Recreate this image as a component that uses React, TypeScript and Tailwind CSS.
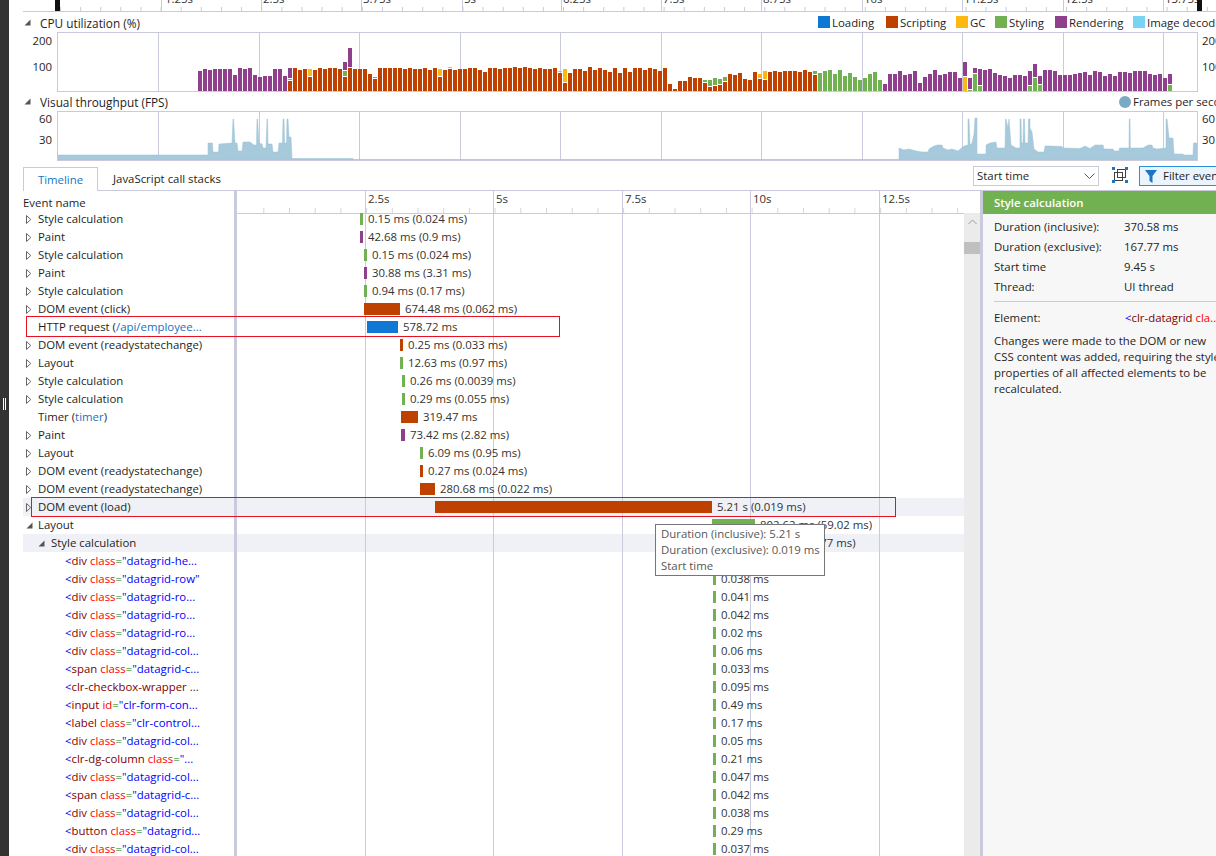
const grid = [158, 259, 359, 460, 560, 661, 761, 862, 962, 1063, 1163];
const rulerGrid = [161, 261, 361, 462, 561, 661, 761, 862, 962, 1063, 1163];
const colors: Record<string, string> = { o: "#bf4100", p: "#903f8c", g: "#72b152", y: "#fdb813" };

const cpu =
  "p20 p22 p21 p22 p22 p22 p22 p16 p23 p22 p23 p16 p14 p15 p15 p22 p22 p15 o10+g1+p10 o23 o21 o22 o14+y7 o21 o23 o22 o23 o23 o22 o14+g5+p8 o23+p19 o22 o22 o22 o17 o12+g1 o23 o23 o23 o23 o23 o22 o23 o22 o22 o23 o21 o23 o14+y7 o21 o22+y1 " +
  "o21 o22 o22 o23 o23 o21 o19 o23 o23 o22 o23 o23 o24 o23 o24 o23 o22 o23 o22 o22 o23 o18+y1 o8+y13 o18 o22 o22 o20 o24 o21 o23 o21 o19 o23 o18 o23 o19 o23 o23 o21 o23 o22 o20 o23 o7 o2 o10 o10 o14 o13 o13 o8+g2 o4+g6 " +
  "o5+g7 o6+g5 o9+g4 o17 o16 o18 o12 o11 o19 o12+y4 o11+y8 o19 o20 o19 o20 o20 o20 o19 o21 o19 o16+g3 g18 g20 g21 g17 g21 g15 g18 g14 g11 g13 g17 g19 g11 p7 p17 p17 p20 p16 p17 p20 p8 p14 p17 p21 p16 p17 p19 p19 p13 y14+p14 g1+p11 " +
  "g17+p5 g5+p16 p21 p22 p18 p16 p15 p13 p16 p16 p15 g5+p14 g13+p13 g6+p8 p21 p21 p20 p16 p16 p16 p17 p18 p19 p16 p20 p19 p15 p17 p15 p19 p19 p18 p20 p20 p20 p17 p16 p17 p13 g6+p10";

const fps =
  "57,155 208,155 208,143 212.5,143 213,152 218.5,152 219,144 232,143 233,119 233.5,119 235,143 237,143 238,151 242,151 243,142 250,142 254,145 256.5,145 257,119 257.5,119 259,143 262,144 263,148 266,148 267,119 267.5,119 268,144 272,144 273,152 278,152 279,143 282.5,143 283,119 284,119 284.5,143 286.5,143 287,119 288,119 289,137 291,137 292,158.5 353,158.5 353,159.5 899,159.5 " +
  "899,148 904,150 909,149 916,151 922,152 928,152 929,149 933,146.5 937,145 942,145 943,148 948,150 952,149 958,151 964,146 968,145 968,119 969,119 970,145 972,143 974,134 975,118 977,118 977,154 986,154 986,145 990,143 996,142 997,148 1005,148 1005.5,119 1006,119 1008,128 1009,119 1011,145 1016,148 1020,148 1020,119 1021,119 1021.5,143 1023,143 1023.5,119 1024.5,119 1025,143 1028,143 1028.5,119 1030,119 1030,128 1032,132 1034,149 1038,152 1044,152 1045,146 1050,146 1062,146.5 1063,148 1080,148.5 1085,146 1090,148.5 1095,145 1103,145 1104,149 1113,149 1114,151 1119,151 1119.5,148 1129,148 1129.3,119 1130,119 1130.3,148 1143,148 1148,145 1152,145 1153,148 1157,149 1166,148 1166,119 1167,119 1168,128 1169,138 1173,138 1174,154 1183,154 1184,155 1193,155 1193.5,143 1198,143 1198,160 57,160";

const TopRuler = () => {
  const labels = ["1.25s", "2.5s", "3.75s", "5s", "6.25s", "7.5s", "8.75s", "10s", "11.25s", "12.5s", "13.75s"];
  const minor = Array.from({ length: 58 }, (_, i) => 60 + i * 20.12);
  return (
    <svg viewBox="9 0 1207 12" className="block w-[1207px] h-[12px] shrink-0">
      <rect x="23" y="11" width="1193" height="1" fill="#c9cbdc" />
      {minor.map((x) => (
        <rect key={x} x={x} y="7" width="1" height="4" fill="#c9cbdc" />
      ))}
      {rulerGrid.map((x, i) => (
        <g key={x}>
          <rect x={x} y="0" width="1" height="11" fill="#c9cbdc" />
          <text x={i === 0 ? x + 4 : x + 2} y="3" fontSize="11.4" fill="#333">{labels[i]}</text>
        </g>
      ))}
      <rect x="55" y="0" width="5" height="11" fill="#111" />
      <rect x="1197" y="0" width="5" height="11" fill="#111" />
    </svg>
  );
};

const OpenArrow = () => (
  <svg width="7" height="7" viewBox="0 0 7 7" className="shrink-0">
    <polygon points="6.5,0.5 6.5,6.5 0.5,6.5" fill="#555" />
  </svg>
);

const ClosedArrow = () => (
  <svg width="6" height="9" viewBox="0 0 6 9" className="shrink-0">
    <polygon points="0.5,0.5 4.8,4.5 0.5,8.5" fill="none" stroke="#666" />
  </svg>
);

const LegendItem = ({ color, label, width }: { color: string; label: string; width: string }) => (
  <div className={`flex items-center gap-[2px] shrink-0 ${width}`}>
    <span className="w-[12px] h-[12px] block" style={{ backgroundColor: color }} />
    <span className="mt-[2px]">{label}</span>
  </div>
);

const CpuChart = () => (
  <svg viewBox="57 32 1141 60" className="block w-[1141px] h-[60px] shrink-0">
    {grid.map((x) => (
      <rect key={x} x={x} y="32" width="1" height="60" fill="#c9cbdc" />
    ))}
    {cpu.split(" ").map((bar, i) => {
      let y = 91;
      return bar.split("+").map((s, j) => {
        const h = Number(s.slice(1));
        y -= h;
        const r = <rect key={`${i}-${j}`} x={198 + i * 5} y={y} width="4" height={h} fill={colors[s[0]]} />;
        y -= 1;
        return r;
      });
    })}
    <rect x="57.5" y="32.5" width="1140" height="59" fill="none" stroke="#c9cbdc" />
  </svg>
);

const FpsChart = () => (
  <svg viewBox="57 111 1141 50" className="block w-[1141px] h-[50px] shrink-0">
    {grid.map((x) => (
      <rect key={x} x={x} y="111" width="1" height="50" fill="#c9cbdc" />
    ))}
    <polygon points={fps} fill="#a6c9dc" stroke="#9cc2d6" strokeWidth="0.5" />
    <rect x="57.5" y="111.5" width="1140" height="49" fill="none" stroke="#c9cbdc" />
  </svg>
);

const FitIcon = () => (
  <svg width="16" height="16" viewBox="0 0 16 16" className="shrink-0">
    <rect x="2.5" y="5.5" width="8" height="8" fill="none" stroke="#424242" />
    <rect x="5.5" y="2.5" width="8" height="8" fill="none" stroke="#424242" />
    <rect x="0" y="0" width="3" height="3" fill="#1b75c4" />
    <rect x="13" y="0" width="3" height="3" fill="#1b75c4" />
    <rect x="0" y="13" width="3" height="3" fill="#1b75c4" />
    <rect x="13" y="13" width="3" height="3" fill="#1b75c4" />
  </svg>
);

const Tag = ({ name, attr, value, dark }: { name: string; attr?: string; value?: string; dark?: string }) => (
  <>
    <span className="text-[#0000ff]">&lt;</span>
    <span className="text-[#800000]">{name}</span>
    {attr && <span className="text-[#ff0000]"> {attr}</span>}
    {value && <span className="text-[#008000]">=</span>}
    {value && <span className="text-[#0000ff]">{value}</span>}
    {dark && <span className="text-[#333]">{dark}</span>}
  </>
);

const Link = ({ label, link }: { label: string; link: string }) => (
  <>
    {label} (<span className="text-[#1a6fc0]">{link}</span>
  </>
);

type Row = {
  name: React.ReactNode;
  arrow?: "open" | "closed";
  level?: number;
  x: number;
  w: number;
  c: string;
  text: string;
  hl?: boolean;
};

const STYLE = "#72b152";
const PAINT = "#903f8c";
const SCRIPT = "#bf4100";
const LOAD = "#0e78d4";

const child = (name: string, attr: string, value: string, text: string): Row => ({
  name: <Tag name={name} attr={attr} value={value} />,
  level: 2,
  x: 713,
  w: 3,
  c: STYLE,
  text,
});

const rows: Row[] = [
  { name: "Style calculation", arrow: "closed", x: 360, w: 3, c: STYLE, text: "0.15 ms (0.024 ms)" },
  { name: "Paint", arrow: "closed", x: 360, w: 3, c: PAINT, text: "42.68 ms (0.9 ms)" },
  { name: "Style calculation", arrow: "closed", x: 364, w: 3, c: STYLE, text: "0.15 ms (0.024 ms)" },
  { name: "Paint", arrow: "closed", x: 364, w: 3, c: PAINT, text: "30.88 ms (3.31 ms)" },
  { name: "Style calculation", arrow: "closed", x: 364, w: 3, c: STYLE, text: "0.94 ms (0.17 ms)" },
  { name: "DOM event (click)", arrow: "closed", x: 364, w: 36, c: SCRIPT, text: "674.48 ms (0.062 ms)" },
  { name: <Link label="HTTP request" link="/api/employee..." />, x: 367, w: 31, c: LOAD, text: "578.72 ms" },
  { name: "DOM event (readystatechange)", arrow: "closed", x: 400, w: 3, c: SCRIPT, text: "0.25 ms (0.033 ms)" },
  { name: "Layout", arrow: "closed", x: 400, w: 3, c: STYLE, text: "12.63 ms (0.97 ms)" },
  { name: "Style calculation", arrow: "closed", x: 402, w: 3, c: STYLE, text: "0.26 ms (0.0039 ms)" },
  { name: "Style calculation", arrow: "closed", x: 402, w: 3, c: STYLE, text: "0.29 ms (0.055 ms)" },
  { name: <><Link label="Timer" link="timer" />)</>, x: 401, w: 17, c: SCRIPT, text: "319.47 ms" },
  { name: "Paint", arrow: "closed", x: 401, w: 4, c: PAINT, text: "73.42 ms (2.82 ms)" },
  { name: "Layout", arrow: "closed", x: 420, w: 3, c: STYLE, text: "6.09 ms (0.95 ms)" },
  { name: "DOM event (readystatechange)", arrow: "closed", x: 420, w: 3, c: SCRIPT, text: "0.27 ms (0.024 ms)" },
  { name: "DOM event (readystatechange)", arrow: "closed", x: 420, w: 15, c: SCRIPT, text: "280.68 ms (0.022 ms)" },
  { name: "DOM event (load)", arrow: "closed", x: 435, w: 277, c: SCRIPT, text: "5.21 s (0.019 ms)", hl: true },
  { name: "Layout", arrow: "open", x: 712, w: 43, c: STYLE, text: "802.62 ms (59.02 ms)" },
  { name: "Style calculation", arrow: "open", level: 1, x: 712, w: 20, c: STYLE, text: "370.58 ms (167.77 ms)", hl: true },
  child("div", "class", '"datagrid-he...', "0.12 ms"),
  child("div", "class", '"datagrid-row"', "0.038 ms"),
  child("div", "class", '"datagrid-ro...', "0.041 ms"),
  child("div", "class", '"datagrid-ro...', "0.042 ms"),
  child("div", "class", '"datagrid-ro...', "0.02 ms"),
  child("div", "class", '"datagrid-col...', "0.06 ms"),
  child("span", "class", '"datagrid-c...', "0.033 ms"),
  { name: <Tag name="clr-checkbox-wrapper" dark=" ..." />, level: 2, x: 713, w: 3, c: STYLE, text: "0.095 ms" },
  child("input", "id", '"clr-form-con...', "0.49 ms"),
  child("label", "class", '"clr-control...', "0.17 ms"),
  child("div", "class", '"datagrid-col...', "0.05 ms"),
  child("clr-dg-column", "class", '"...', "0.21 ms"),
  child("div", "class", '"datagrid-col...', "0.047 ms"),
  child("span", "class", '"datagrid-c...', "0.042 ms"),
  child("div", "class", '"datagrid-col...', "0.038 ms"),
  child("button", "class", '"datagrid...', "0.29 ms"),
  child("div", "class", '"datagrid-col...', "0.037 ms"),
];

const NameRow = ({ row }: { row: Row }) => {
  const pad = row.level === 2 ? "pl-[42px]" : row.level === 1 ? "pl-[15px]" : "pl-[3px]";
  return (
    <div className={`flex items-center h-[18px] whitespace-nowrap overflow-hidden ${pad} ${row.hl ? "bg-[#eff1f6]" : ""}`}>
      {row.level !== 2 && (
        <span className={`shrink-0 flex items-center ${row.level === 1 ? "w-[13px]" : "w-[12px]"}`}>
          {row.arrow === "closed" && <ClosedArrow />}
          {row.arrow === "open" && <OpenArrow />}
        </span>
      )}
      <span>{row.name}</span>
    </div>
  );
};

const BarRow = ({ row }: { row: Row }) => (
  <div className={`flex items-center h-[18px] whitespace-nowrap ${row.hl ? "bg-[#eff1f6]" : ""}`}>
    <span
      className="relative z-10 h-[12px] block shrink-0"
      style={{ marginLeft: row.x - 237, width: row.w, backgroundColor: row.c }}
    />
    <span className="relative z-10 ml-[5px] text-[#333]">{row.text}</span>
  </div>
);

const TimeRuler = () => {
  const ticks = Array.from({ length: 28 }, (_, i) => 26.3 + i * 25.7);
  const labels: [number, string][] = [[128, "2.5s"], [256, "5s"], [385, "7.5s"], [513, "10s"], [642, "12.5s"]];
  return (
    <svg width="727" height="23" viewBox="0 0 727 23" className="block shrink-0 -mb-[4px] relative z-10">
      {ticks.map((x) => (
        <rect key={x} x={x} y="17" width="1" height="5" fill="#d4d5e2" />
      ))}
      <rect x="0" y="22" width="727" height="1" fill="#c9cbdc" />
      {labels.map(([x, t]) => (
        <text key={t} x={x + 3} y="12" fontSize="11.4" fill="#333">{t}</text>
      ))}
    </svg>
  );
};

const details = [
  ["Duration (inclusive):", "370.58 ms"],
  ["Duration (exclusive):", "167.77 ms"],
  ["Start time", "9.45 s"],
  ["Thread:", "UI thread"],
];

const App = () => {
  return (
    <div className="relative flex w-[1216px] h-[856px] overflow-hidden bg-white text-[#1e1e1e] font-['Open_Sans',sans-serif] text-[11.4px] leading-[16px]">
      <div className="w-[9px] shrink-0 bg-[#333333] pt-[398px] flex justify-center">
        <div className="flex gap-[1px] h-[12px]">
          <span className="w-px h-full bg-white" />
          <span className="w-px h-full bg-white" />
        </div>
      </div>

      <div className="flex flex-col w-[1207px] shrink-0">
        <TopRuler />

        <div className="flex items-center h-[20px] pl-[15px] whitespace-nowrap shrink-0">
          <span className="w-[16px] shrink-0"><OpenArrow /></span>
          <span className="w-[778px] shrink-0 mt-[2px] font-medium text-[11.8px]">CPU utilization (%)</span>
          <LegendItem color="#0e78d4" label="Loading" width="w-[68px]" />
          <LegendItem color="#bf4100" label="Scripting" width="w-[70px]" />
          <LegendItem color="#fdb813" label="GC" width="w-[39px]" />
          <LegendItem color="#72b152" label="Styling" width="w-[60px]" />
          <LegendItem color="#903f8c" label="Rendering" width="w-[78px]" />
          <LegendItem color="#77d5f3" label="Image decoding" width="w-[100px]" />
        </div>

        <div className="flex h-[60px] shrink-0">
          <div className="w-[48px] shrink-0 flex flex-col items-end pr-[5px] pt-[1px] gap-[10px]">
            <span>200</span>
            <span>100</span>
          </div>
          <CpuChart />
          <div className="flex flex-col pl-[4px] pt-[1px] gap-[10px]">
            <span>200</span>
            <span>100</span>
          </div>
        </div>

        <div className="flex items-center h-[19px] pl-[15px] whitespace-nowrap shrink-0">
          <span className="w-[16px] shrink-0"><OpenArrow /></span>
          <span className="w-[1079px] shrink-0 font-medium text-[11.8px]">Visual throughput (FPS)</span>
          <span className="w-[12px] h-[12px] rounded-full bg-[#7aa9c6] shrink-0" />
          <span className="ml-[2px]">Frames per second</span>
        </div>

        <div className="flex h-[50px] shrink-0">
          <div className="w-[48px] shrink-0 flex flex-col items-end pr-[5px] gap-[5px]">
            <span>60</span>
            <span>30</span>
          </div>
          <FpsChart />
          <div className="flex flex-col pl-[4px] gap-[5px]">
            <span>60</span>
            <span>30</span>
          </div>
        </div>

        <div className="flex h-[25px] ml-[14px] mt-[5px] border-b border-[#c9cbdc] shrink-0">
          <div className="w-[75px] h-[24px] mt-px bg-white border border-b-0 border-[#c9cbdc] flex items-center justify-center text-[#1376c6] shrink-0">
            Timeline
          </div>
          <div className="ml-[15px] h-[24px] mt-px flex items-center whitespace-nowrap shrink-0">JavaScript call stacks</div>
          <div className="flex-1" />
          <div className="w-[126px] h-[20px] border border-[#c9cbdc] flex items-center justify-between pl-[3px] pr-[3px] shrink-0">
            <span>Start time</span>
            <svg width="11" height="7" viewBox="0 0 11 7">
              <polyline points="0.5,0.5 5.5,5.5 10.5,0.5" fill="none" stroke="#555" />
            </svg>
          </div>
          <div className="ml-[13px] mt-px shrink-0"><FitIcon /></div>
          <div className="ml-[11px] mr-[-10px] w-[87px] h-[20px] border border-[#2b8fdb] bg-[#e9f4fc] flex items-center pl-[5px] gap-[6px] whitespace-nowrap overflow-hidden shrink-0">
            <svg width="12" height="13" viewBox="0 0 12 13" className="shrink-0">
              <polygon points="0,0 12,0 7.5,6 7.5,13 4.5,11 4.5,6" fill="#1b75c4" />
            </svg>
            <span>Filter events</span>
          </div>
        </div>

        <div className="flex flex-1 min-h-0 ml-[14px]">
          <div className="w-[211px] shrink-0 overflow-hidden">
            <div className="h-[19px] pt-[4px] font-medium">Event name</div>
            {rows.map((r, i) => (
              <NameRow key={i} row={r} />
            ))}
          </div>
          <div className="w-[3px] shrink-0 bg-[#c9cbdc]" />
          <div className="relative w-[727px] shrink-0 overflow-hidden">
            <TimeRuler />
            {[128, 256, 385, 513, 642].map((x) => (
              <span key={x} className="absolute top-0 bottom-0 w-px bg-[#c9cbdc] z-[1]" style={{ left: x }} />
            ))}
            {rows.map((r, i) => (
              <BarRow key={i} row={r} />
            ))}
          </div>
          <div className="w-[16px] shrink-0 flex flex-col">
            <div className="h-[22px] bg-white" />
            <div className="flex-1 bg-[#ebebeb] flex flex-col items-center">
              <svg width="9" height="6" viewBox="0 0 9 6" className="mt-[6px]">
                <polyline points="0.5,5 4.5,1 8.5,5" fill="none" stroke="#999" />
              </svg>
              <div className="w-full h-[12px] mt-[17px] bg-[#c0c0c0]" />
            </div>
          </div>
          <div className="w-[3px] shrink-0 bg-[#c9cbdc]" />
          <div className="w-[233px] shrink-0 bg-[#f7f7f7] overflow-hidden">
            <div className="h-[23px] bg-[#72b152] text-white font-semibold pl-[11px] flex items-center">Style calculation</div>
            <div className="pl-[11px] pt-[3px]">
              {details.map(([k, v]) => (
                <div key={k} className="grid grid-cols-[130px_1fr] h-[20px] items-center whitespace-nowrap">
                  <span>{k}</span>
                  <span>{v}</span>
                </div>
              ))}
              <div className="border-t border-[#c9cbdc] mt-[4px] pt-[8px] flex whitespace-nowrap">
                <span className="w-[131px] shrink-0">Element:</span>
                <span><Tag name="clr-datagrid" attr="cla..." /></span>
              </div>
              <p className="mt-[7px] whitespace-nowrap">
                Changes were made to the DOM or new
                <br />
                CSS content was added, requiring the style
                <br />
                properties of all affected elements to be
                <br />
                recalculated.
              </p>
            </div>
          </div>
        </div>
      </div>

      <div className="absolute left-[26px] top-[316px] w-[534px] h-[21px] border border-[#e81123] z-20" />
      <div className="absolute left-[31px] top-[497px] w-[865px] h-[20px] border border-[#e81123] z-20" />
      <div className="absolute left-[655px] top-[524px] w-[170px] h-[52px] border border-[#767676] bg-white text-[#575757] pl-[5px] pt-[1px] z-30 whitespace-nowrap">
        <div>Duration (inclusive): 5.21 s</div>
        <div>Duration (exclusive): 0.019 ms</div>
        <div>Start time</div>
      </div>
    </div>
  );
};

export default App;
